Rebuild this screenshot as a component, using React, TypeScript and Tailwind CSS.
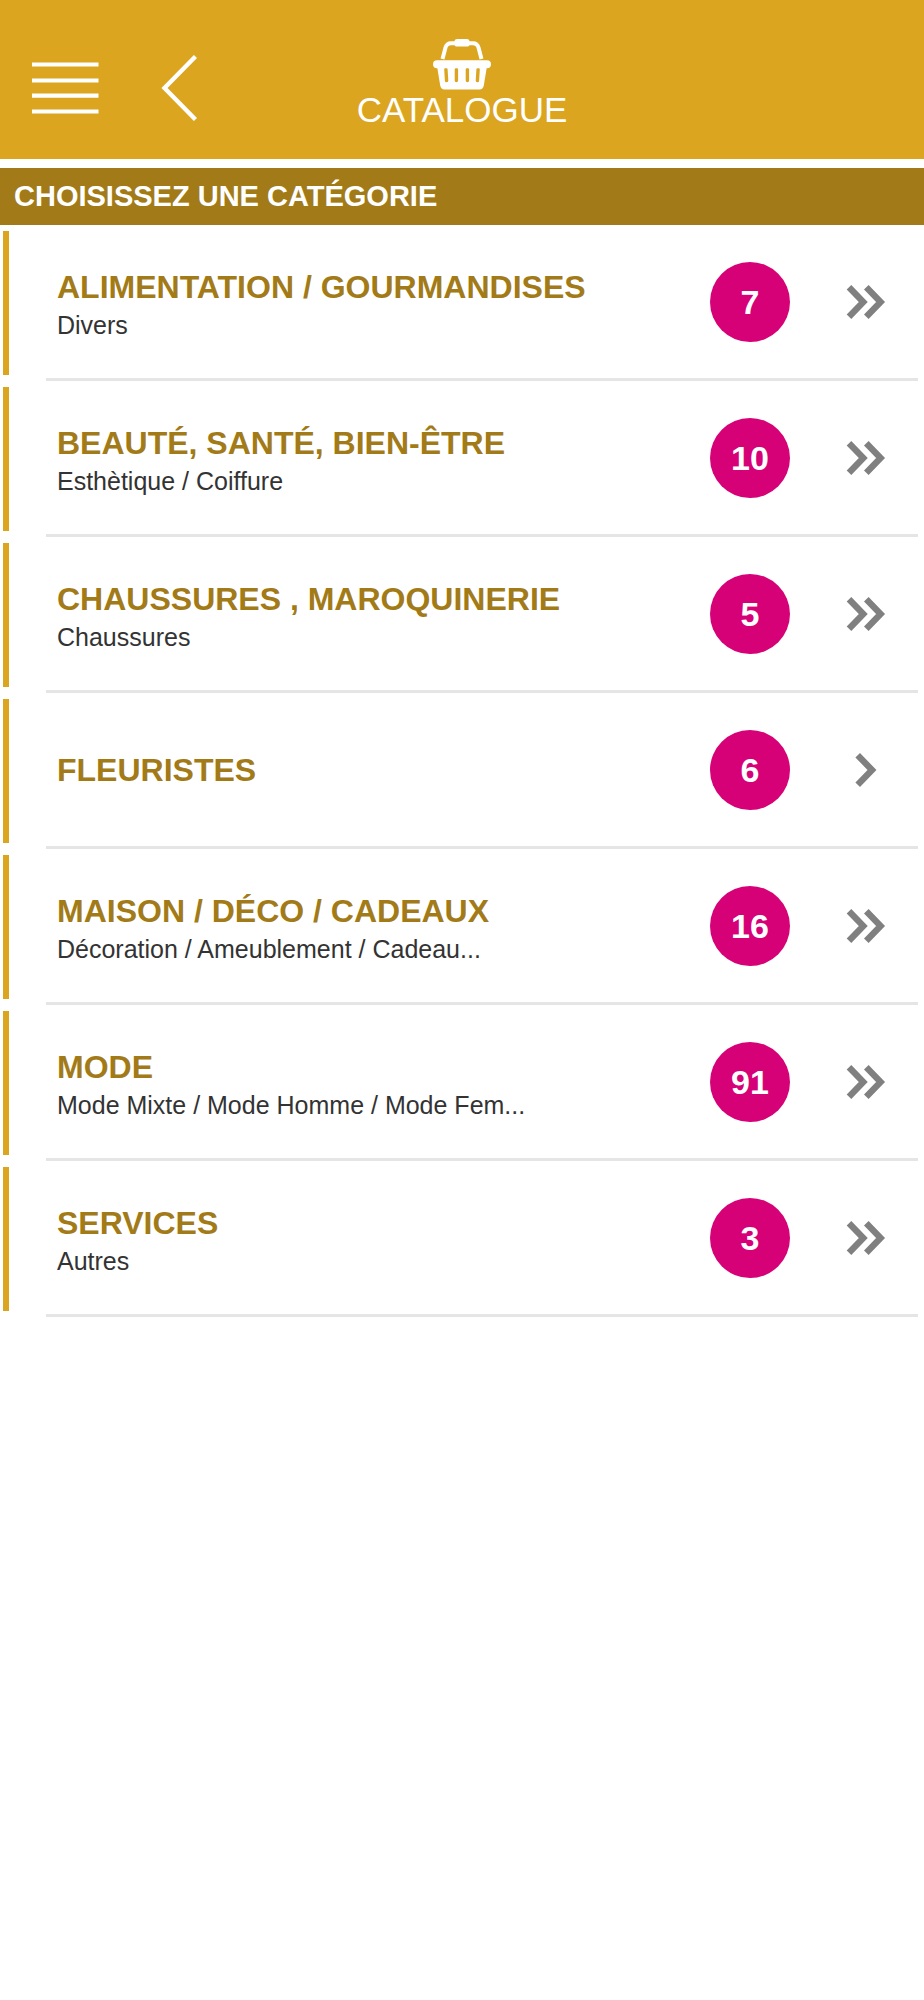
type Category = { title: string; subtitle?: string; count: number };

const categories: Category[] = [
  { title: "ALIMENTATION / GOURMANDISES", subtitle: "Divers", count: 7 },
  { title: "BEAUTÉ, SANTÉ, BIEN-ÊTRE", subtitle: "Esthètique / Coiffure", count: 10 },
  { title: "CHAUSSURES , MAROQUINERIE", subtitle: "Chaussures", count: 5 },
  { title: "FLEURISTES", count: 6 },
  { title: "MAISON / DÉCO / CADEAUX", subtitle: "Décoration / Ameublement / Cadeau...", count: 16 },
  { title: "MODE", subtitle: "Mode Mixte / Mode Homme / Mode Fem...", count: 91 },
  { title: "SERVICES", subtitle: "Autres", count: 3 },
];

function MenuIcon() {
  return (
    <svg width="68" height="52" viewBox="0 0 68 52" fill="none" stroke="#fff" strokeWidth="4.2" aria-hidden="true">
      <path d="M0 2.500H66.500M0 18.500H66.500M0 33.700H66.500M0 49.500H66.500" />
    </svg>
  );
}

function BackIcon() {
  return (
    <svg width="36" height="66" viewBox="0 0 36 66" fill="none" stroke="#fff" strokeWidth="4.4" aria-hidden="true">
      <path d="M34.5 1.5L3.5 33L34.5 64.5" />
    </svg>
  );
}

function BasketIcon() {
  return (
    <svg width="58" height="51" viewBox="0 0 58 51" aria-hidden="true">
      <path d="M9.500 20L12.500 8.500Q13.800 4.200 18 4.200H40Q44.200 4.200 45.500 8.500L48.500 20" fill="none" stroke="#fff" strokeWidth="4" />
      <rect x="21.5" y="0" width="15" height="7.6" rx="2.6" fill="#fff" />
      <rect x="0" y="21.2" width="58" height="8" rx="4" fill="#fff" />
      <path
        fillRule="evenodd"
        fill="#fff"
        d="M4 27H54L50.800 46.500Q50 50.500 46.500 50.500H11.500Q8 50.500 7.200 46.500Z
        M11.200 30.500A1.700 1.700 0 0 1 14.600 30.300L15.300 41.500A1.700 1.700 0 0 1 11.900 41.700Z
        M21.700 30.400A1.700 1.700 0 0 1 25.100 30.400V41.500A1.700 1.700 0 0 1 21.700 41.500Z
        M32.700 30.400A1.700 1.700 0 0 1 36.100 30.400V41.500A1.700 1.700 0 0 1 32.700 41.500Z
        M43.400 30.300A1.700 1.700 0 0 1 46.800 30.500L46.100 41.700A1.700 1.700 0 0 1 42.700 41.500Z"
      />
    </svg>
  );
}

function ArrowIcon({ double }: { double: boolean }) {
  return (
    <svg width="40" height="36" viewBox="0 0 40 36" fill="none" stroke="#808080" strokeWidth="6.4" aria-hidden="true">
      {double ? (
        <path d="M3 3.200L17.300 18L3 32.800M20.300 3.200L34.600 18L20.300 32.800" />
      ) : (
        <path d="M11.700 3.200L26 18L11.700 32.800" />
      )}
    </svg>
  );
}

function CategoryRow({ title, subtitle, count }: Category) {
  return (
    <li>
      <a href="#" className="flex h-[156px] pl-[3px] pr-1.5">
        <span className="mt-1.5 h-36 w-1.5 shrink-0 bg-[#dba520]" />
        <span className="ml-[37px] flex min-w-0 flex-1 items-center border-b-3 border-[#e5e5e5] pl-[11px]">
          <span className="flex min-w-0 flex-1 flex-col">
            {subtitle ? (
              <>
                <span className="truncate pt-2 text-[32px] leading-[38px] font-bold text-[#a27b18]">{title}</span>
                <span className="truncate text-[25px] leading-[38px] text-[#333]">{subtitle}</span>
              </>
            ) : (
              <span className="truncate text-[32px] leading-[38px] font-bold text-[#a27b18]">{title}</span>
            )}
          </span>
          <span className="flex size-20 shrink-0 items-center justify-center rounded-full bg-[#d60077] text-[34px] leading-10 font-bold text-white">
            {count}
          </span>
          <span className="mr-8 ml-14 shrink-0">
            <ArrowIcon double={Boolean(subtitle)} />
          </span>
        </span>
      </a>
    </li>
  );
}

export default function App() {
  return (
    <div className="min-h-screen bg-white font-['Liberation_Sans',Arial,sans-serif]">
      <header className="grid h-[159px] grid-cols-[1fr_auto_1fr] items-center bg-[#dba520] px-8">
        <div className="flex items-center gap-[61px] pt-4">
          <button type="button" aria-label="Menu">
            <MenuIcon />
          </button>
          <button type="button" aria-label="Retour">
            <BackIcon />
          </button>
        </div>
        <div className="flex flex-col items-center pt-2.5">
          <BasketIcon />
          <h1 className="text-[35px] leading-10 text-white">CATALOGUE</h1>
        </div>
      </header>
      <main className="mt-[9px]">
        <h2 className="flex h-[57px] items-center bg-[#a27b18] px-3.5 pb-0.5 text-[29px] leading-8 font-bold text-white">
          CHOISISSEZ UNE CATÉGORIE
        </h2>
        <ul>
          {categories.map((c) => (
            <CategoryRow key={c.title} {...c} />
          ))}
        </ul>
      </main>
    </div>
  );
}
